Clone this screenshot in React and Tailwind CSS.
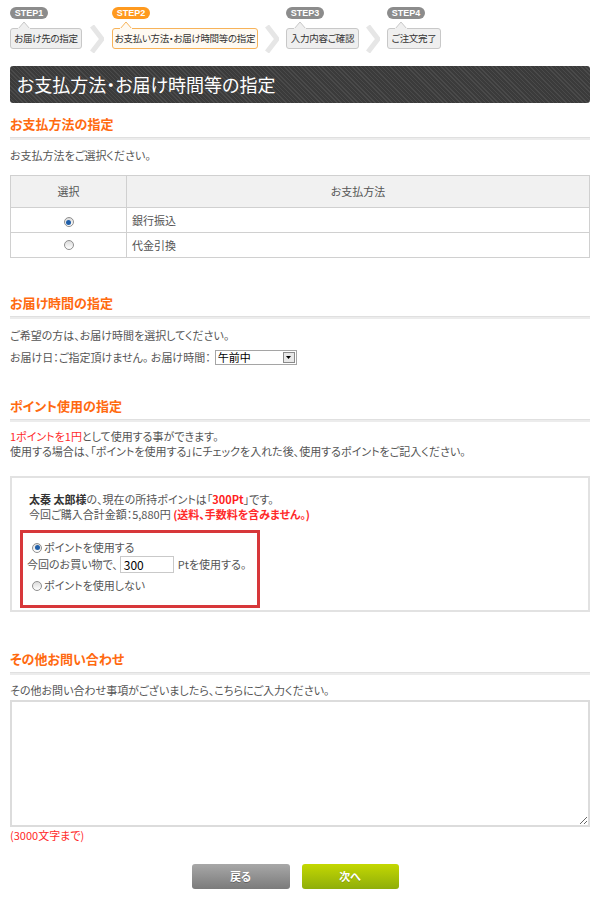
import React from 'react';

const steps = [
  { label: 'STEP1', text: 'お届け先の指定', w: 'w-[72px]' },
  { label: 'STEP2', text: 'お支払い方法・お届け時間等の指定', w: 'w-[146px]', active: true },
  { label: 'STEP3', text: '入力内容ご確認', w: 'w-[73px]' },
  { label: 'STEP4', text: 'ご注文完了', w: 'w-[54px]' },
];

const Chevron = () => (
  <div className="w-[28px] h-[21px] mt-[21px] flex items-center justify-center">
    <svg width="14" height="28" viewBox="0 0 14 28">
      <polyline points="2,1 12,14 2,27" fill="none" stroke="#e6e6e6" strokeWidth="5" />
    </svg>
  </div>
);

const Step = ({ label, text, w, active }) => (
  <div className="flex flex-col items-start">
    <div
      className={`h-[12px] w-[38px] rounded-full text-white text-[9px] font-bold leading-[12px] text-center font-['Liberation_Sans',sans-serif] ${
        active ? 'bg-[#ff9a1f]' : 'bg-[#8c8c8c]'
      }`}
    >
      {label}
    </div>
    <div className="relative mt-[9px]">
      <svg className="absolute left-[8px] -top-[6px]" width="12" height="7" viewBox="0 0 12 7">
        <polygon points="0,7 6,0 12,7" fill={active ? '#fffaf2' : '#efefef'} stroke={active ? '#f7b35a' : '#c8c8c8'} />
        <rect x="0" y="6" width="12" height="2" fill={active ? '#fffaf2' : '#efefef'} />
      </svg>
      <div
        className={`${w} h-[21px] rounded-[3px] border text-[9.5px] tracking-[-0.3px] leading-[19px] text-center whitespace-nowrap text-[#333] ${
          active ? 'border-[#f7b35a] bg-[#fffaf2]' : 'border-[#c8c8c8] bg-[#efefef]'
        }`}
      >
        {text}
      </div>
    </div>
  </div>
);

const Radio = ({ checked }) => (
  <span className="inline-flex items-center justify-center w-[10px] h-[10px] rounded-full border border-[#8f8f8f] bg-gradient-to-b from-[#dcdcdc] to-white shrink-0">
    {checked && <span className="block w-[5px] h-[5px] rounded-full bg-[#1f5ea8]" />}
  </span>
);

const SectionTitle = ({ children, className = '' }) => (
  <div className={className}>
    <h2 className="text-[13px] leading-[16px] font-bold text-[#ff6a10]">{children}</h2>
    <div className="mt-[5px] h-[3px] bg-[#ececec] border-t border-[#e0e0e0]" />
  </div>
);

export default function App() {
  return (
    <div className="w-[600px] bg-white text-[#555] text-[11px] font-['Noto_Sans_CJK_JP',sans-serif] [font-feature-settings:'palt'] pb-[12px]">
      {/* Steps */}
      <div className="flex items-start pt-[7px] pl-[10px]">
        <Step {...steps[0]} />
        <div className="w-[30px] flex justify-center"><Chevron /></div>
        <Step {...steps[1]} />
        <Chevron />
        <Step {...steps[2]} />
        <Chevron />
        <Step {...steps[3]} />
      </div>

      <div className="px-[10px]">
        {/* Title bar */}
        <div className="mt-[17px] h-[37px] rounded-[3px] pl-[7px] flex items-center text-white text-[18px] bg-[repeating-linear-gradient(45deg,#4a4a4a_0px,#4a4a4a_1px,#3b3b3b_1px,#3b3b3b_3px)]">
          お支払方法・お届け時間等の指定
        </div>

        {/* Payment */}
        <SectionTitle className="mt-[13px]">お支払方法の指定</SectionTitle>
        <p className="mt-[7px] leading-[16px]">お支払方法をご選択ください。</p>
        <table className="mt-[12px] w-full border-collapse border border-[#d0d0d0]">
          <thead>
            <tr className="h-[32px] bg-[#f1f1f1]">
              <th className="w-[116px] border border-[#d0d0d0] font-normal">選択</th>
              <th className="border border-[#d0d0d0] font-normal">お支払方法</th>
            </tr>
          </thead>
          <tbody>
            <tr className="h-[25px]">
              <td className="border border-[#d0d0d0] text-center"><Radio checked /></td>
              <td className="border border-[#d0d0d0] pl-[5px]">銀行振込</td>
            </tr>
            <tr className="h-[25px]">
              <td className="border border-[#d0d0d0] text-center"><Radio /></td>
              <td className="border border-[#d0d0d0] pl-[5px]">代金引換</td>
            </tr>
          </tbody>
        </table>

        {/* Delivery time */}
        <SectionTitle className="mt-[37px]">お届け時間の指定</SectionTitle>
        <p className="mt-[8px] leading-[16px]">ご希望の方は、お届け時間を選択してください。</p>
        <div className="mt-[6px] flex items-center leading-[16px]">
          <span>お届け日：ご指定頂けません。&nbsp;お届け時間：</span>
          <div className="ml-[4px] w-[82px] h-[15px] border border-[#a5a5a5] flex items-center justify-between bg-white">
            <span className="pl-[2px] text-[11px] leading-[13px] text-black">午前中</span>
            <span className="w-[12px] h-[11px] mr-[1px] border border-[#8a8a8a] bg-[#e8e8e8] flex items-center justify-center">
              <svg width="5" height="3" viewBox="0 0 5 3"><polygon points="0,0 5,0 2.5,3" fill="#000" /></svg>
            </span>
          </div>
        </div>

        {/* Points */}
        <SectionTitle className="mt-[33px]">ポイント使用の指定</SectionTitle>
        <div className="mt-[7px] leading-[15px]">
          <p><span className="text-[#ff2a2a]">1ポイントを1円</span>として使用する事ができます。</p>
          <p>使用する場合は、「ポイントを使用する」にチェックを入れた後、使用するポイントをご記入ください。</p>
        </div>
        <div className="mt-[17px] border-2 border-[#e2e2e2] pt-[14px] pb-[2px] pl-[8px]">
          <div className="pl-[9px] leading-[15px]">
            <p>
              <span className="font-bold text-[#333]">太秦 太郎様</span>の、現在の所持ポイントは「
              <span className="font-bold text-[#ff1f1f]">300Pt</span>」です。
            </p>
            <p>
              今回ご購入合計金額：5,880円 <span className="font-bold text-[#ff2a2a]">(送料、手数料を含みません。)</span>
            </p>
          </div>
          <div className="mt-[8px] w-[240px] border-[3px] border-[#d7373a] pt-[7px] pb-[12px] pl-[4px] leading-[15px]">
            <label className="flex items-center gap-[2px] pl-[5px]">
              <Radio checked />
              <span>ポイントを使用する</span>
            </label>
            <div className="mt-[1px] flex items-center">
              <span>今回のお買い物で、</span>
              <span className="ml-[2px] w-[54px] h-[17px] border border-[#c9c9c9] pl-[3px] text-[12px] leading-[15px] text-black">300</span>
              <span className="ml-[4px]">Ptを使用する。</span>
            </div>
            <label className="mt-[5px] flex items-center gap-[2px] pl-[5px]">
              <Radio />
              <span>ポイントを使用しない</span>
            </label>
          </div>
        </div>

        {/* Inquiry */}
        <SectionTitle className="mt-[39px]">その他お問い合わせ</SectionTitle>
        <p className="mt-[7px] leading-[16px]">その他お問い合わせ事項がございましたら、こちらにご入力ください。</p>
        <textarea className="mt-[2px] block w-full h-[127px] border-2 border-[#dcdcdc] outline-none" />
        <p className="mt-[1px] text-[#ff2a2a] leading-[14px]">(3000文字まで)</p>

        {/* Buttons */}
        <div className="mt-[22px] flex justify-center gap-[12px] pr-[10px]">
          <button className="w-[98px] h-[25px] rounded-[3px] bg-gradient-to-b from-[#a8a8a8] to-[#7b7b7b] text-white font-bold text-[11px] [text-shadow:0_1px_0_rgba(0,0,0,0.3)]">
            戻る
          </button>
          <button className="w-[97px] h-[25px] rounded-[3px] bg-gradient-to-b from-[#c4d800] to-[#8fae0a] text-white font-bold text-[11px] [text-shadow:0_1px_0_rgba(0,0,0,0.2)]">
            次へ
          </button>
        </div>
      </div>
    </div>
  );
}
